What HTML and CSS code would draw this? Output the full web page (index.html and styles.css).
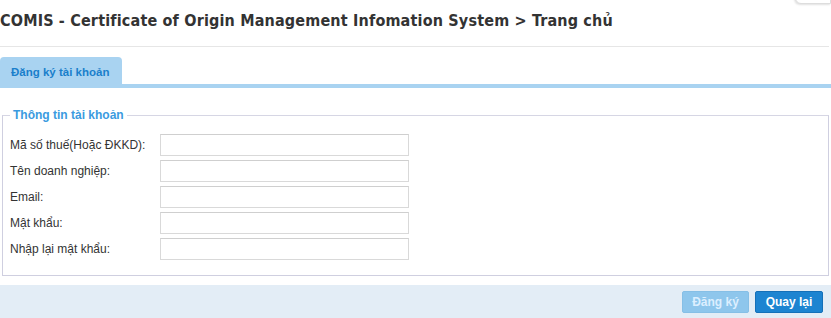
FILE: index.html
```html
<!DOCTYPE html>
<html lang="vi">

<head>
  <meta charset="UTF-8">
  <meta name="viewport" content="width=device-width, initial-scale=1.0">
  <title>COMIS - Đăng ký tài khoản</title>
  <link rel="stylesheet" href="styles.css">
</head>

<body>

  <div class="corner-tab"></div>

  <div class="page-header">
    <h1>COMIS - Certificate of Origin Management Infomation System &gt; Trang chủ</h1>
  </div>

  <div class="tabs">
    <a class="tab active">Đăng ký tài khoản</a>
  </div>

  <!-- Account form -->
  <fieldset class="account-box">
    <legend>Thông tin tài khoản</legend>
    <div class="form-row">
      <label for="tax">Mã số thuế(Hoặc ĐKKD):</label>
      <input type="text" class="input-field" id="tax">
    </div>
    <div class="form-row">
      <label for="company">Tên doanh nghiệp:</label>
      <input type="text" class="input-field" id="company">
    </div>
    <div class="form-row">
      <label for="email">Email:</label>
      <input type="email" class="input-field" id="email">
    </div>
    <div class="form-row">
      <label for="password">Mật khẩu:</label>
      <input type="password" class="input-field" id="password">
    </div>
    <div class="form-row">
      <label for="repassword">Nhập lại mật khẩu:</label>
      <input type="password" class="input-field" id="repassword">
    </div>
  </fieldset>

  <div class="action-bar">
    <button class="btn btn-disabled" disabled>Đăng ký</button>
    <button class="btn btn-primary">Quay lại</button>
  </div>

</body>

</html>
```

FILE: styles.css
```css
* {
  box-sizing: border-box;
}

body {
  margin: 0;
  font-family: "Liberation Sans", Arial, sans-serif;
  font-size: 12px;
  color: #333;
  background: #fff;
  position: relative;
  overflow: hidden;
}

.corner-tab {
  position: absolute;
  top: -4px;
  right: 0;
  width: 36px;
  height: 8px;
  background: #fff;
  border: 1px solid #ddd;
  border-radius: 0 0 0 6px;
  box-shadow: -1px 1px 2px rgba(0, 0, 0, 0.12);
}

.page-header {
  height: 47px;
  padding: 11px 0 0 0;
  border-bottom: 1px solid #e6e6e6;
  margin-right: 2px;
}

.page-header h1 {
  margin: 0;
  font-family: "DejaVu Sans Condensed", "DejaVu Sans", sans-serif;
  font-weight: bold;
  font-size: 16px;
  line-height: 20px;
  letter-spacing: 0.17px;
  color: #333;
}

/* Tabs */
.tabs {
  margin-top: 10px;
  border-bottom: 4px solid #a9d3f1;
  display: flex;
}

.tab {
  display: block;
  width: 122px;
  height: 27px;
  padding: 8px 0 0 11px;
  background: #a9d3f1;
  border-radius: 4px 4px 0 0;
  color: #1a7fcb;
  font-weight: bold;
  font-size: 11.5px;
  line-height: 14px;
}

/* Fieldset */
.account-box {
  margin: 20px 2px 0 2px;
  padding: 12px 7px 15px 7px;
  border: 1px solid #cfcfe0;
  border-top-color: #d6d6e4;
}

.account-box legend {
  margin-left: 0;
  padding: 0 3px;
  color: #3a9be0;
  font-weight: bold;
  font-size: 12px;
  line-height: 14px;
}

.form-row {
  display: flex;
  align-items: center;
  margin-bottom: 4px;
}

.form-row:last-child {
  margin-bottom: 0;
}

.form-row label {
  width: 150px;
  font-size: 12px;
  color: #333;
}

.input-field {
  width: 249px;
  height: 22px;
  margin: 0;
  border: 1px solid #d9d9d9;
  border-top-color: #cfcfcf;
  background: #fff;
  font-size: 12px;
}

/* Bottom bar */
.action-bar {
  margin-top: 9px;
  height: 40px;
  background: #e3edf6;
  display: flex;
  justify-content: flex-end;
  align-items: flex-start;
  gap: 6px;
  padding: 6px 8px 0 0;
}

.btn {
  height: 22px;
  padding: 0;
  border-radius: 2px;
  font-family: "Liberation Sans", Arial, sans-serif;
  font-size: 12px;
  font-weight: bold;
  white-space: nowrap;
  color: #fff;
  cursor: pointer;
}

.btn-disabled {
  width: 67px;
  background: #8ec6ec;
  border: 1px solid #86bfe6;
  color: #dcefff;
  cursor: default;
}

.btn-primary {
  width: 68px;
  background: #1d84d1;
  border: 1px solid #1570b8;
}
```
